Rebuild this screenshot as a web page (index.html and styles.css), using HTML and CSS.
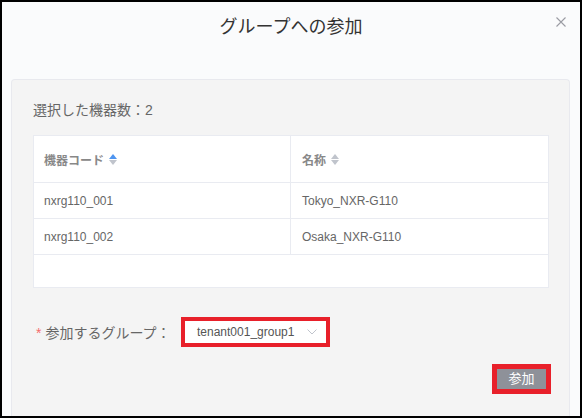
FILE: index.html
```html
<!DOCTYPE html>
<html lang="ja">
<head>
<meta charset="utf-8">
<link rel="stylesheet" href="styles.css">
</head>
<body>
<div class="modal">
  <div class="header">
    <span></span>
    <h1 class="title">グループへの参加</h1>
    <button class="close" aria-label="close">
      <svg width="10" height="10" viewBox="0 0 10 10"><path d="M0.5 0.5L9.5 9.5M9.5 0.5L0.5 9.5" stroke="#9a9ca3" stroke-width="1.1" fill="none"/></svg>
    </button>
  </div>
  <div class="panel">
    <div class="count">選択した機器数：2</div>
    <div class="table">
      <div class="row head">
        <div class="cell">機器コード <span class="sort active-up"><i class="up"></i><i class="down"></i></span></div>
        <div class="cell">名称 <span class="sort"><i class="up"></i><i class="down"></i></span></div>
      </div>
      <div class="row">
        <div class="cell">nxrg110_001</div>
        <div class="cell">Tokyo_NXR-G110</div>
      </div>
      <div class="row">
        <div class="cell">nxrg110_002</div>
        <div class="cell">Osaka_NXR-G110</div>
      </div>
      <div class="empty"></div>
    </div>
    <div class="form-row">
      <label class="label"><span class="req">*</span>参加するグループ：</label>
      <div class="hl-select">
        <div class="select">
          <span class="val">tenant001_group1</span>
          <svg width="10" height="6" viewBox="0 0 10 6"><path d="M0.5 0.5L5 5L9.5 0.5" stroke="#c0c4cc" stroke-width="1" fill="none"/></svg>
        </div>
      </div>
    </div>
    <div class="actions">
      <div class="hl-btn"><button class="btn">参加</button></div>
    </div>
  </div>
</div>
</body>
</html>
```

FILE: styles.css
```css
* { box-sizing: border-box; }
html, body { margin: 0; padding: 0; }
body {
  background: #000;
  padding: 2px;
  width: 582px;
  height: 418px;
  font-family: "Liberation Sans", "Noto Sans CJK JP", sans-serif;
}
.modal {
  width: 578px;
  height: 414px;
  background: #fafbfc;
  overflow: hidden;
  display: flex;
  flex-direction: column;
}
.header {
  display: grid;
  grid-template-columns: 1fr auto 1fr;
  align-items: start;
  height: 77px;
  padding-top: 13px;
}
.title {
  margin: 0;
  font-size: 18px;
  line-height: 24px;
  font-weight: normal;
  color: #333;
}
.close {
  justify-self: end;
  margin-right: 14px;
  margin-top: 2px;
  border: 0;
  background: none;
  padding: 0;
  width: 10px;
  height: 10px;
  display: flex;
}
.panel {
  flex: 1;
  margin: 0 10px 0 9px;
  background: #f4f4f4;
  border: 1px solid #e8e9ee;
  border-bottom: 0;
  border-radius: 4px 4px 0 0;
  padding: 20px 20px 0 21px;
}
.count {
  font-size: 14px;
  line-height: 20px;
  color: #666;
}
.table {
  margin-top: 15px;
  background: #fff;
  border: 1px solid #e9ebf1;
}
.row {
  display: grid;
  grid-template-columns: 256px 1fr;
  height: 36px;
  border-bottom: 1px solid #e9ebf1;
}
.row.head { height: 47px; }
.cell {
  display: flex;
  align-items: center;
  padding-left: 10px;
  font-size: 12px;
  color: #666;
}
.cell + .cell {
  border-left: 1px solid #e9ebf1;
  padding-left: 11px;
}
.head .cell {
  color: #888;
  font-weight: bold;
  gap: 4px;
}
.sort {
  display: inline-flex;
  flex-direction: column;
  gap: 1px;
  margin-left: 1px;
}
.sort i {
  display: block;
  width: 0;
  height: 0;
  border-left: 4.5px solid transparent;
  border-right: 4.5px solid transparent;
}
.sort .up { border-bottom: 5px solid #c0c4cc; }
.sort .down { border-top: 5px solid #c0c4cc; }
.sort.active-up .up { border-bottom-color: #4f95f0; }
.empty { height: 32px; }
.form-row {
  display: flex;
  align-items: center;
  margin-top: 29px;
  height: 30px;
}
.label {
  font-size: 14px;
  color: #666;
  padding-left: 3px;
  width: 148px;
  white-space: nowrap;
}
.req {
  color: #f56c6c;
  margin-right: 4px;
}
.hl-select {
  border: 4px solid #e8202a;
}
.select {
  width: 141px;
  height: 22px;
  background: #fff;
  display: flex;
  align-items: center;
  justify-content: space-between;
  padding: 0 9px 0 12px;
}
.val {
  font-size: 12px;
  color: #555;
}
.actions {
  display: flex;
  justify-content: flex-end;
  margin-top: 17px;
  margin-right: -2px;
}
.hl-btn {
  border: 5px solid #e8202a;
}
.btn {
  display: block;
  width: 49px;
  height: 20px;
  border: 0;
  padding: 0;
  background: #8e9199;
  color: #fff;
  font-size: 13px;
  font-family: "Liberation Sans", "Noto Sans CJK JP", sans-serif;
  line-height: 20px;
}
```
